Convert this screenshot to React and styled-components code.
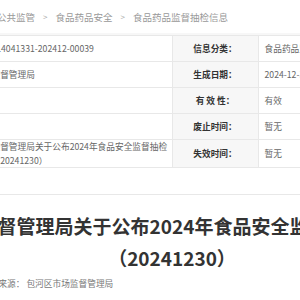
import React from 'react';
import styled, { createGlobalStyle } from 'styled-components';

const GlobalStyle = createGlobalStyle`
  body {
    margin: 0;
    background: #fff;
    font-family: "Noto Sans CJK SC", "Noto Sans", sans-serif;
  }
`;

const Viewport = styled.div`
  width: 300px;
  height: 300px;
  overflow: hidden;
  background: #fff;
`;

// the shot is a window onto a wider page, scrolled sideways
const Page = styled.div`
  width: 634px;
  margin-left: -145px;
`;

const Crumbs = styled.div`
  height: 33px;
  display: flex;
  align-items: center;
  gap: 8px;
  padding-left: 44px;
  font-size: 9.5px;
  color: #999;
  white-space: nowrap;
`;

const Sep = styled.span`
  font-size: 8px;
  color: #aaa;
`;

const Band = styled.div`
  height: 2px;
  background: #f7f7f7;
`;

const InfoTable = styled.table`
  width: 100%;
  border-collapse: collapse;
  table-layout: fixed;
  font-size: 8.7px;
`;

const Row = styled.tr`
  height: ${(p) => p.$h || 26}px;
`;

const Label = styled.th`
  width: 85px;
  padding: 0;
  background: #f7f7f7;
  border: 1px solid #e8e8e8;
  color: #333;
  font-weight: bold;
  text-align: center;
  white-space: pre;
`;

const Value = styled.td`
  padding: 0 4px 0 6px;
  border: 1px solid #e8e8e8;
  color: #666;
  text-align: left;
  white-space: nowrap;
  overflow: hidden;
  line-height: ${(p) => p.$lh || 'normal'};
  ${(p) => p.$wrap && 'white-space: normal;'}
`;

const Divider = styled.div`
  margin-top: 26px;
  border-top: 1px solid #e8e8e8;
`;

const Title = styled.h1`
  margin: 15px 0 0;
  font-size: 19px;
  line-height: 32px;
  font-weight: bold;
  color: #333;
  text-align: center;
`;

const Source = styled.div`
  padding-left: 126px;
  font-size: 8.7px;
  line-height: 20px;
  color: #777;
  white-space: nowrap;
`;

const crumbs = ['首页', '信息公开', '公共监管', '食品药品安全', '食品药品监督抽检信息'];
const title = '包河区市场监督管理局关于公布2024年食品安全监督抽检信息的通告（20241230）';

const rows = [
  ['索 引 号：', '11340111001' + '4041331-202412-00039', '信息分类：', '食品药品监督抽检信息'],
  ['发布机构：', '包河区市场监督管理局', '生成日期：', '2024-12-30'],
  ['发文日期：', '', '有 效 性：', '有效'],
  ['文　　号：', '', '废止时间：', '暂无'],
];

export default function App() {
  return (
    <Viewport>
      <GlobalStyle />
      <Page>
        <Crumbs>
          {crumbs.map((c, i) => (
            <React.Fragment key={c}>
              {i > 0 && <Sep>&gt;</Sep>}
              <span>{c}</span>
            </React.Fragment>
          ))}
        </Crumbs>
        <Band />
        <InfoTable>
          <tbody>
            {rows.map((r) => (
              <Row key={r[0]}>
                <Label>{r[0]}</Label>
                <Value>{r[1]}</Value>
                <Label>{r[2]}</Label>
                <Value>{r[3]}</Value>
              </Row>
            ))}
            <Row $h={27}>
              <Label>名　　称：</Label>
              <Value $wrap $lh="13.5px">{title}</Value>
              <Label>失效时间：</Label>
              <Value>暂无</Value>
            </Row>
          </tbody>
        </InfoTable>
        <Divider />
        <Title>{title}</Title>
        <Source>信息来源： 包河区市场监督管理局</Source>
      </Page>
    </Viewport>
  );
}
